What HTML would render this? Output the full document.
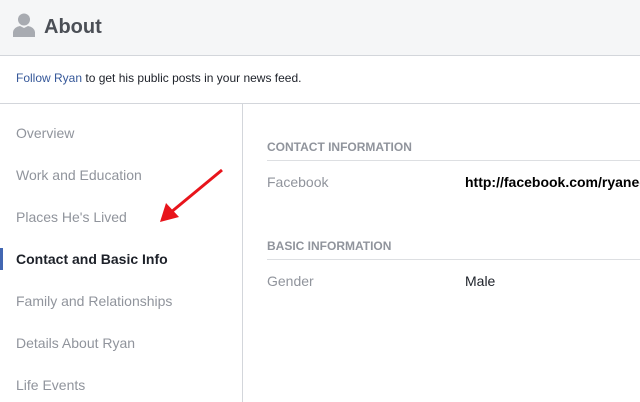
<!DOCTYPE html>
<html><head><style>
body{margin:0;width:640px;height:402px;overflow:hidden;font-family:"Liberation Sans",Arial,sans-serif;background:#fff;position:relative}
.a{position:absolute;white-space:nowrap}
.nav{font-size:14px;color:#90949c;left:16px}
.h{font-size:12px;font-weight:bold;color:#90949c;left:267px}
.l{font-size:14px;color:#90949c;left:267px}
.v{font-size:14px;color:#1d2129;left:465px}
.line{position:absolute;left:267px;right:0;height:1px;background:#dddfe2}
</style></head><body>
<div class="a" style="left:0;top:0;width:640px;height:55px;background:#f5f6f7;border-bottom:1px solid #d3d6db"></div>
<svg class="a" style="left:13px;top:13px" width="22" height="24" viewBox="0 0 22 24"><circle cx="11" cy="6.5" r="6" fill="#a8abb1"/><path d="M0 24 V19 Q1 14 7 13 L11 15 L15 13 Q21 14 22 19 V24Z" fill="#a8abb1"/></svg>
<div class="a" style="left:44px;top:16px;font-size:20px;font-weight:bold;color:#4b4f56">About</div>
<div class="a" style="left:16px;top:71px;font-size:12px;color:#1d2129"><span style="color:#365899">Follow Ryan</span> to get his public posts in your news feed.</div>
<div class="a" style="left:0;top:103px;width:640px;height:1px;background:#d3d6db"></div>
<div class="a" style="left:242px;top:104px;width:1px;height:298px;background:#d3d6db"></div>
<div class="a nav" style="top:125px">Overview</div>
<div class="a nav" style="top:167px">Work and Education</div>
<div class="a nav" style="top:209px">Places He's Lived</div>
<div class="a" style="left:0;top:248px;width:3px;height:22px;background:#4267b2"></div>
<div class="a nav" style="top:251px;color:#1d2129;font-weight:bold">Contact and Basic Info</div>
<div class="a nav" style="top:293px">Family and Relationships</div>
<div class="a nav" style="top:335px">Details About Ryan</div>
<div class="a nav" style="top:377px">Life Events</div>
<svg class="a" style="left:155px;top:165px" width="75" height="65"><line x1="67" y1="5" x2="15" y2="48" stroke="#e8141b" stroke-width="3"/><polygon points="5,57 11,38 24,52" fill="#e8141b"/></svg>
<div class="a h" style="top:140px">CONTACT INFORMATION</div>
<div class="line" style="top:160px"></div>
<div class="a l" style="top:174px">Facebook</div>
<div class="a v" style="top:174px;font-weight:bold;color:#000;width:175px;overflow:hidden">http://facebook.com/ryanedwards</div>
<div class="a h" style="top:239px">BASIC INFORMATION</div>
<div class="line" style="top:259px"></div>
<div class="a l" style="top:273px">Gender</div>
<div class="a v" style="top:273px">Male</div>
</body></html>
